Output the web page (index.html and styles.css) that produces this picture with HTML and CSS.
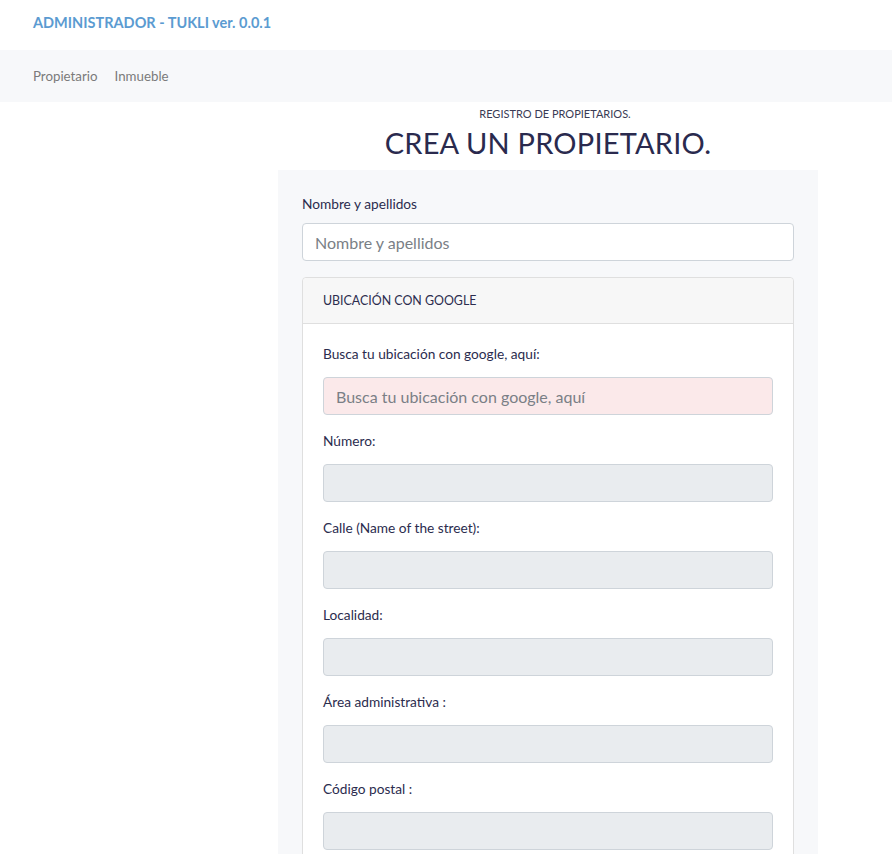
FILE: index.html
```html
<!DOCTYPE html>
<html lang="es">
<head>
<meta charset="utf-8">
<title>Administrador - Tukli</title>
<link rel="stylesheet" href="styles.css">
</head>
<body>
<header class="topbar">
  <a class="brand" href="#">ADMINISTRADOR - TUKLI ver. 0.0.1</a>
</header>
<nav class="navbar">
  <a class="nav-link" href="#">Propietario</a>
  <a class="nav-link" href="#">Inmueble</a>
</nav>
<main class="page">
  <p class="eyebrow">REGISTRO DE PROPIETARIOS.</p>
  <h1 class="title">CREA UN PROPIETARIO.</h1>
  <form class="form-box">
    <div class="group">
      <label class="label">Nombre y apellidos</label>
      <input class="input" type="text" placeholder="Nombre y apellidos">
    </div>
    <section class="card">
      <div class="card-header">UBICACIÓN CON GOOGLE</div>
      <div class="card-body">
        <div class="group">
          <label class="label">Busca tu ubicación con google, aquí:</label>
          <input class="input input-search" type="text" placeholder="Busca tu ubicación con google, aquí">
        </div>
        <div class="group">
          <label class="label">Número:</label>
          <input class="input input-disabled" type="text" disabled>
        </div>
        <div class="group">
          <label class="label">Calle (Name of the street):</label>
          <input class="input input-disabled" type="text" disabled>
        </div>
        <div class="group">
          <label class="label">Localidad:</label>
          <input class="input input-disabled" type="text" disabled>
        </div>
        <div class="group">
          <label class="label">Área administrativa :</label>
          <input class="input input-disabled" type="text" disabled>
        </div>
        <div class="group">
          <label class="label">Código postal :</label>
          <input class="input input-disabled" type="text" disabled>
        </div>
      </div>
    </section>
  </form>
</main>
</body>
</html>
```

FILE: styles.css
```css
* { box-sizing: border-box; }
html, body {
  margin: 0;
  padding: 0;
  background: #ffffff;
  font-family: "Lato", "Noto Sans", sans-serif;
  color: #2b2c4e;
}
.topbar {
  height: 50px;
  display: flex;
  align-items: center;
  padding: 0 33px;
}
.brand {
  font-size: 14.5px;
  font-weight: 700;
  color: #5b9bd1;
  text-decoration: none;
  margin-top: -6px;
}
.navbar {
  height: 52px;
  background: #f7f8fa;
  display: flex;
  align-items: center;
  gap: 17px;
  padding: 0 33px;
}
.nav-link {
  font-size: 13.3px;
  color: #7b7b7b;
  text-decoration: none;
}
.page {
  display: flex;
  flex-direction: column;
  align-items: center;
  padding-left: 278px;
  padding-right: 74px;
}
.eyebrow {
  margin: 5px 0 0 14px;
  font-size: 11px;
  line-height: 14px;
  color: #3a3b55;
}
.title {
  margin: 0;
  font-size: 29px;
  font-weight: 400;
  line-height: 44px;
  color: #2a2a4e;
  letter-spacing: 0.2px;
}
.form-box {
  width: 540px;
  background: #f7f8fa;
  padding: 24px 24px 0;
  margin-top: 5px;
}
.group {
  display: flex;
  flex-direction: column;
  margin-bottom: 16px;
}
.label {
  font-size: 13.7px;
  line-height: 20px;
  color: #2b2c4e;
  margin-bottom: 9px;
}
.input {
  height: 38px;
  width: 100%;
  border: 1px solid #ced4da;
  border-radius: 4px;
  background: #ffffff;
  padding: 0 12px;
  font-family: "Lato", "Noto Sans", sans-serif;
  font-size: 16px;
  color: #495057;
}
.input::placeholder { color: #7a7f86; }
.input-search { background: #fbe9ea; }
.input-disabled { background: #e9ecef; }
.card {
  border: 1px solid #dfdfdf;
  border-radius: 4px;
  background: #ffffff;
}
.card-header {
  height: 46px;
  display: flex;
  align-items: center;
  padding: 0 20px;
  background: #f7f7f7;
  border-bottom: 1px solid #dfdfdf;
  font-size: 12.4px;
  color: #2b2c4e;
  border-radius: 4px 4px 0 0;
}
.card-body {
  padding: 18px 20px 4px;
}
.card-body .group { margin-bottom: 14px; }
.card-body .label { line-height: 24px; margin-bottom: 11px; }
```
